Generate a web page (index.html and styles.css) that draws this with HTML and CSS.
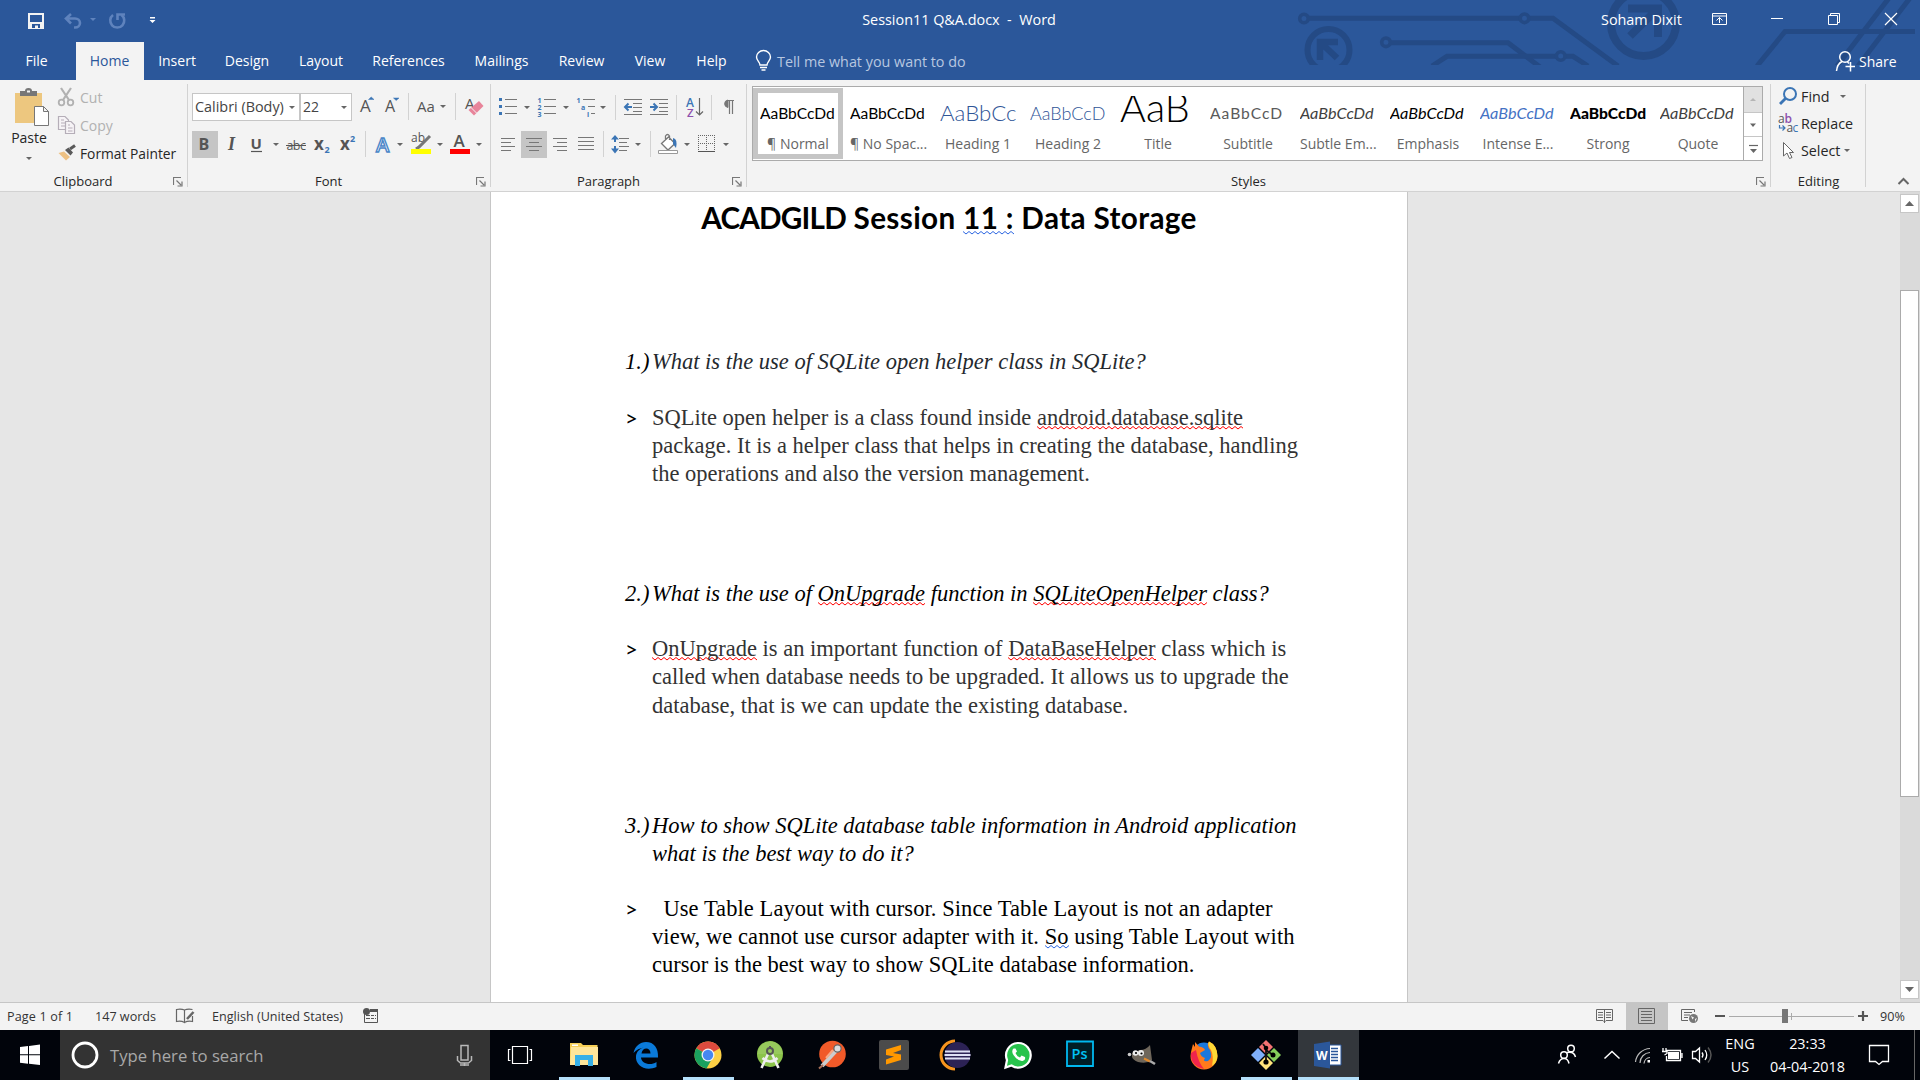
FILE: index.html
```html
<!DOCTYPE html>
<html lang="en">
<head>
<meta charset="utf-8">
<title>Session11 Q&amp;A.docx - Word</title>
<link rel="stylesheet" href="styles.css">
</head>
<body>
<div class="window">
  <header class="header">
    <svg class="circuit" width="640" height="65" viewBox="1290 0 640 65">
      <g fill="none" stroke="#244a85" stroke-width="5">
        <circle cx="1304" cy="18.5" r="4.3" stroke-width="3.6"/>
        <path d="M1309 18.3H1520M1529 18.3H1553L1618 66"/>
        <circle cx="1524.5" cy="18.3" r="4.3" stroke-width="3.6"/>
        <circle cx="1328.5" cy="50" r="21" stroke-width="6"/>
        <path d="M1320 60V42H1338M1320 42L1337 58" stroke-width="6.5"/>
        <circle cx="1386" cy="42.3" r="4.3" stroke-width="3.6"/>
        <path d="M1391 42.8H1508L1540 67"/>
        <path d="M1432 66L1447 56.3H1556M1565 56.3H1573L1588 66"/>
        <circle cx="1560.7" cy="56" r="4.3" stroke-width="3.6"/>
        <circle cx="1643.5" cy="23.5" r="32.5" stroke-width="8"/>
        <path d="M1628 8.500H1658V37M1658 8.500L1630 36" stroke-width="8"/>
        <path d="M1757 66L1785 31.500H1915M1837 66L1889 -2M1858 66L1910 -2"/>
      </g>
    </svg>
    <div class="titlebar">
      <svg width="160" height="42" viewBox="0 0 160 42">
        <path d="M28 13H44V29H28Z" fill="#f3f3f3"/><path d="M30 15H42V22H30ZM32 24H40V28H38V25.500H35V28H32Z" fill="#2b579a"/>
        <g fill="none" stroke="#5f83bd" stroke-width="2.600"><path d="M66 18.500H75A5 4.500 0 0 1 75 27.500H74M71 14L66 18.500L71 23.500"/><path d="M121.500 15A7 7 0 1 1 113 15"/><path d="M117.500 20V14.500H125"/></g>
        <path d="M90 18H96L93 21Z" fill="#5f83bd"/>
        <path d="M150 17H155V18.500H150ZM149.500 20H155.500L152.500 23Z" fill="#fff"/>
      </svg>
      <div class="doc-name"><span class="t">Session11 Q&amp;A.docx&nbsp; -&nbsp; Word</span></div>
      <div class="user"><span class="t">Soham Dixit</span></div>
      <svg width="230" height="42" viewBox="1690 0 230 42"><g fill="none" stroke="#fff">
        <path d="M1712.500 13.500H1726.500V24.500H1712.500ZM1712 16H1727M1719.500 23V17.500M1716.500 20.500L1719.500 17.500L1722.500 20.500"/>
        <path d="M1771 18.500H1783"/>
        <path d="M1828.500 15.500H1837.500V24.500H1828.500ZM1830.500 15V13.500H1839.500V22.500H1838"/>
        <path d="M1885 13L1897 25M1897 13L1885 25" stroke-width="1.200"/></g></svg>
    </div>
    <nav class="tabs">
      <span class="tab file"><span class="t">File</span></span><span class="tab home"><span class="t">Home</span></span><span class="tab insert"><span class="t">Insert</span></span><span class="tab design"><span class="t">Design</span></span><span class="tab layout"><span class="t">Layout</span></span><span class="tab refs"><span class="t">References</span></span><span class="tab mail"><span class="t">Mailings</span></span><span class="tab review"><span class="t">Review</span></span><span class="tab view"><span class="t">View</span></span><span class="tab help"><span class="t">Help</span></span>
      <svg width="35" height="38" viewBox="742 42 35 38"><path d="M760 65C760 62 756.500 60.500 756.500 57A7 6.500 0 0 1 770.500 57C770.500 60.500 767 62 767 65ZM760 67.500H767M761.500 70H765.500" fill="none" stroke="#fff" stroke-width="1.400"/></svg>
      <span class="tell t">Tell me what you want to do</span>
      <span class="share"><svg width="24" height="26" viewBox="1835 48 24 26"><g fill="none" stroke="#fff" stroke-width="1.500"><circle cx="1845" cy="57" r="5.300"/><path d="M1836.500 71C1837 66 1839 63 1842 61.500M1847.500 62L1849 63.500M1845.500 66.500H1855M1850.500 62V71.500"/></g></svg><span class="t">Share</span></span>
    </nav>
  </header>

  <section class="ribbon">
    <div class="group clipboard">
      <div class="group-body">
        <div class="paste">
          <svg width="56" height="48" viewBox="0 80 56 48"><path d="M15 93H42V123H15Z" fill="#edc77f"/><path d="M20 91H25Q25 88 28.500 88T32 91H37V96H20Z" fill="#777"/><path d="M27 90.500H30V92.500H27Z" fill="#f3f3f3"/><path d="M34.500 106.500H43.500L48.500 111.500V125.500H34.500ZM43.500 106.500V111.500H48.500" fill="#fff" stroke="#777"/></svg>
          <span class="t">Paste</span>
          <svg width="56" height="10" viewBox="0 154 56 10"><path d="M26 157H32L29 160Z" fill="#666"/></svg>
        </div>
        <div class="clip-list">
          <div class="cmd off"><svg width="24" height="28" viewBox="56 84 24 28"><g fill="none" stroke="#b1b1b1" stroke-width="1.800"><circle cx="61.500" cy="102.500" r="2.800"/><circle cx="70.500" cy="102.500" r="2.800"/><path d="M61 88L69 100M71 88L63 100" stroke-width="2.200"/></g></svg><span class="t">Cut</span></div>
          <div class="cmd off"><svg width="24" height="28" viewBox="56 112 24 28"><g fill="#f6f3f6" stroke="#b5aeb8" stroke-width="1.200"><path d="M58.500 116.500H65L68.500 120V129.500H58.500ZM61 120H64M61 123H66M61 126H66"/><path d="M65.500 121.500H71L74.500 125V133.500H65.500ZM68 125H70M68 128H72.500M68 131H72.500"/></g></svg><span class="t">Copy</span></div>
          <div class="cmd painter"><svg width="24" height="28" viewBox="56 140 24 28"><path d="M58.500 153L64 151.500L70 157L66 160.500Z" fill="#edc184"/><path d="M65 150L68.500 147.500L73 152.500L70.500 155.500Z" fill="#595959"/><path d="M70 149L75 145.500" stroke="#595959" stroke-width="3"/></svg><span class="t">Format Painter</span></div>
        </div>
      </div>
      <div class="group-label"><span class="t">Clipboard</span><svg class="launch" width="10" height="10" viewBox="0 0 10 10"><path d="M.5 8V.5H8M3.500 3.500L8 8M9 4.500V9H4.500" fill="none" stroke="#777" stroke-width="1.200"/></svg></div>
    </div>

    <div class="group font">
      <div class="group-body stack">
        <div class="row top">
          <div class="combo face"><span class="t">Calibri (Body)</span><i class="caret"></i></div>
          <div class="combo size"><span class="t">22</span><i class="caret"></i></div>
          <svg width="52" height="28" viewBox="352 93 52 28"><g class="glyph"><text x="360" y="112" font-size="17">A</text><text x="385" y="112" font-size="16">A</text></g><path d="M368.500 99.500H374L371.200 97ZM393.500 98H399L396.200 100.500Z" fill="#3b75b5" stroke="#3b75b5" stroke-width=".5"/></svg>
          <svg width="84" height="28" viewBox="404 93 84 28"><path d="M408.500 93V120M455.500 93V120" stroke="#d2d2d2"/><text class="glyph" x="417" y="112" font-size="15">Aa</text><path d="M440 105H446L443 108Z" fill="#666"/><text class="glyph" x="465" y="109" font-size="15">A</text><path d="M479 101L483.500 106L474 115.500L468.500 110Z" fill="#e8849a"/><path d="M471 107.500L476.500 113" stroke="#f3f3f3"/></svg>
        </div>
        <div class="row">
          <span class="on"><svg width="26" height="27" viewBox="192 131 26 27"><text class="glyph" x="198.500" y="150" font-size="16" font-weight="700">B</text></svg></span>
          <svg width="64" height="27" viewBox="218 131 64 27"><text class="serif" x="228" y="150" font-size="18">I</text><text class="glyph" x="250.500" y="149" font-size="15" font-weight="700">U</text><path d="M251 151.500H262" stroke="#555" stroke-width="1.200"/><path d="M273 143H279L276 146Z" fill="#666"/></svg>
          <svg width="88" height="27" viewBox="282 131 88 27"><text class="glyph" x="286.500" y="150" font-size="12.500" letter-spacing="-.6">abc</text><path d="M286 145.500H306" stroke="#555"/><text class="glyph" x="314" y="150" font-size="17" font-weight="700">x</text><text class="blue" x="324.500" y="153" font-size="9" font-weight="700">2</text><text class="glyph" x="340" y="150" font-size="17" font-weight="700">x</text><text class="blue" x="350" y="142" font-size="9" font-weight="700">2</text><path d="M365.500 131V157" stroke="#d2d2d2"/></svg>
          <svg width="118" height="27" viewBox="370 131 118 27"><text class="ui" x="376" y="152" font-size="20" font-weight="600" fill="#fff" stroke="#4a86c8" stroke-width="1.400">A</text><path d="M397 143H403L400 146ZM437 143H443L440 146ZM476 143H482L479 146Z" fill="#666"/><text class="glyph" x="411" y="142" font-size="12">ab</text><path d="M430 136L419 147L416 149" stroke="#777" stroke-width="3" fill="none"/><path d="M411 149H431V154H411Z" fill="#ff0"/><text class="glyph" x="453.500" y="147" font-size="17" font-weight="600">A</text><path d="M450 149H470V154H450Z" fill="red"/></svg>
        </div>
      </div>
      <div class="group-label"><span class="t">Font</span><svg class="launch" width="10" height="10" viewBox="0 0 10 10"><path d="M.5 8V.5H8M3.500 3.500L8 8M9 4.500V9H4.500" fill="none" stroke="#777" stroke-width="1.200"/></svg></div>
    </div>

    <div class="group para">
      <div class="group-body stack">
        <div class="row top">
          <svg width="125" height="28" viewBox="495 93 125 28"><g fill="#3b75b5"><path d="M499 98H502V101H499ZM499 105H502V108H499ZM499 112H502V115H499Z"/><text x="537.500" y="102.500" class="num">1</text><text x="537.500" y="109.500" class="num">2</text><text x="537.500" y="116.500" class="num">3</text><text x="576.500" y="102.500" class="num">1</text><text x="581" y="109.500" class="num">a</text><text x="587" y="116.500" class="num">i</text></g><path d="M505 99.500H517M505 106.500H517M505 113.500H517M544 99.500H556M544 106.500H556M544 113.500H556M583 99.500H595M588 106.500H595M591 113.500H595" stroke="#777"/><path d="M524 106H530L527 109ZM563 106H569L566 109ZM600 106H606L603 109Z" fill="#666"/><path d="M615.500 95V120" stroke="#d2d2d2"/></svg>
          <svg width="62" height="28" viewBox="620 93 62 28"><path d="M624 99.500H642M633 103.500H642M633 107.500H642M633 111.500H642M624 114.500H642M650 99.500H668M659 103.500H668M659 107.500H668M659 111.500H668M650 114.500H668" stroke="#777"/><path d="M632 107H625M628.500 103.500L625 107L628.500 110.500M650 107H657M653.500 103.500L657 107L653.500 110.500" fill="none" stroke="#3b75b5" stroke-width="2"/><path d="M676.500 95V120" stroke="#d2d2d2"/></svg>
          <svg width="58" height="28" viewBox="682 93 58 28"><text x="686" y="106.500" font-size="12" font-weight="600" fill="#3b75b5" class="ui">A</text><text x="687" y="117" font-size="11.500" font-weight="600" fill="#8d50ad" class="ui">Z</text><path d="M699.500 98V115M696 111.500L699.500 115L703 111.500" fill="none" stroke="#666" stroke-width="1.200"/><path d="M711.500 95V120" stroke="#d2d2d2"/><path d="M734 100.500H727M729.500 100V114M732.500 100V114" stroke="#777" stroke-width="1.200"/><path d="M728 100A4 3.800 0 0 0 728 107.500Z" fill="#777" stroke="#777"/></svg>
        </div>
        <div class="row">
          <svg width="26" height="27" viewBox="495 131 26 27"><path d="M501 138.500H515M501 142.500H511M501 146.500H515M501 150.500H511" stroke="#777"/></svg>
          <span class="on"><svg width="26" height="27" viewBox="521 131 26 27"><path d="M526 138.500H542M529 142.500H539M526 146.500H542M529 150.500H539" stroke="#777"/></svg></span>
          <svg width="61" height="27" viewBox="547 131 61 27"><path d="M553 138.500H567M557 142.500H567M553 146.500H567M557 150.500H567M578 137.500H594M578 141.500H594M578 145.500H594M578 149.500H594" stroke="#777"/><path d="M603.500 131V157" stroke="#d2d2d2"/></svg>
          <svg width="47" height="27" viewBox="608 131 47 27"><path d="M619 138.500H629M619 142.500H627M619 146.500H629M619 150.500H627" stroke="#777"/><path d="M615 136V142M615 146V152" stroke="#3b75b5" stroke-width="2"/><path d="M611 139.500L615 135L619 139.500ZM611 148.500L615 153.500L619 148.500Z" fill="#3b75b5"/><path d="M635 143H641L638 146Z" fill="#666"/><path d="M650.500 131V157" stroke="#d2d2d2"/></svg>
          <svg width="80" height="27" viewBox="655 131 80 27"><path d="M661.500 143.500L668.500 137L675 143.500L668 150ZM665.500 140V136Q667.500 133 669.500 136V140" fill="#fff" stroke="#777" stroke-width="1.300"/><path d="M673 138Q678 139 676 148L673 144Z" fill="#3b75b5"/><path d="M658.500 150.500H677.500V153.500H658.500Z" fill="#fff" stroke="#999"/><path d="M684 143H690L687 146ZM723 143H729L726 146Z" fill="#666"/><path d="M698 135.500H716M698 143.500H716M698.500 135V151M706.500 135V151M714.500 135V151" stroke="#666" stroke-dasharray="1 1"/><path d="M698 151.500H715" stroke="#555"/></svg>
        </div>
      </div>
      <div class="group-label"><span class="t">Paragraph</span><svg class="launch" width="10" height="10" viewBox="0 0 10 10"><path d="M.5 8V.5H8M3.500 3.500L8 8M9 4.500V9H4.500" fill="none" stroke="#777" stroke-width="1.200"/></svg></div>
    </div>

    <div class="group styles">
      <div class="group-body">
        <div class="gallery">
          <div class="style picked"><div class="sample"><span class="t">AaBbCcDd</span></div><div class="name t">¶ Normal</div></div>
          <div class="style"><div class="sample"><span class="t">AaBbCcDd</span></div><div class="name t">¶ No Spac...</div></div>
          <div class="style"><div class="sample h1"><span class="t">AaBbCc</span></div><div class="name t">Heading 1</div></div>
          <div class="style"><div class="sample h2"><span class="t">AaBbCcD</span></div><div class="name t">Heading 2</div></div>
          <div class="style"><div class="sample big"><span class="t">AaB</span></div><div class="name t">Title</div></div>
          <div class="style"><div class="sample sub"><span class="t">AaBbCcD</span></div><div class="name t">Subtitle</div></div>
          <div class="style"><div class="sample em soft"><span class="t">AaBbCcDd</span></div><div class="name t">Subtle Em...</div></div>
          <div class="style"><div class="sample em"><span class="t">AaBbCcDd</span></div><div class="name t">Emphasis</div></div>
          <div class="style"><div class="sample em intense"><span class="t">AaBbCcDd</span></div><div class="name t">Intense E...</div></div>
          <div class="style"><div class="sample strong"><span class="t">AaBbCcDd</span></div><div class="name t">Strong</div></div>
          <div class="style"><div class="sample em soft"><span class="t">AaBbCcDd</span></div><div class="name t">Quote</div></div>
          <div class="spin">
            <span class="spin-up"><svg width="18" height="25" viewBox="0 0 18 25"><path d="M6 14H12L9 11Z" fill="#b5b5b5"/></svg></span>
            <span><svg width="18" height="23" viewBox="0 0 18 23"><path d="M6 10.500H12L9 14Z" fill="#666"/></svg></span>
            <span><svg width="18" height="23" viewBox="0 0 18 23"><path d="M5 8.500H14" stroke="#666" stroke-width="1.200"/><path d="M6 12H13L9.500 16Z" fill="#666"/></svg></span>
          </div>
        </div>
      </div>
      <div class="group-label"><span class="t">Styles</span><svg class="launch" width="10" height="10" viewBox="0 0 10 10"><path d="M.5 8V.5H8M3.500 3.500L8 8M9 4.500V9H4.500" fill="none" stroke="#777" stroke-width="1.200"/></svg></div>
    </div>

    <div class="group editing">
      <div class="group-body stack">
        <div class="cmd"><svg width="30" height="27" viewBox="1771 83 30 27"><circle cx="1790" cy="94" r="6" fill="none" stroke="#3b75b5" stroke-width="2"/><path d="M1785.500 98.500L1780 104" stroke="#3b75b5" stroke-width="2.800"/></svg><span class="t">Find</span><i class="caret far"></i></div>
        <div class="cmd"><svg width="30" height="27" viewBox="1771 110 30 27"><g class="ui" font-size="12"><text x="1778" y="123" fill="#555">a</text><text x="1784.500" y="123" fill="#8d50ad" font-weight="600">b</text><text x="1786.500" y="132" fill="#555">a</text><text x="1792.500" y="132" fill="#3b75b5">c</text></g><path d="M1779.500 125V128H1785M1782.500 125.500L1785 128L1782.500 130.500" fill="none" stroke="#3b75b5" stroke-width="1.200"/></svg><span class="t">Replace</span></div>
        <div class="cmd"><svg width="30" height="27" viewBox="1771 137 30 27"><path d="M1783.500 142.500V156L1787 153L1789.500 158.500L1792 157.500L1789.500 152.500H1793.500Z" fill="#fff" stroke="#666"/></svg><span class="t">Select</span><i class="caret near"></i></div>
      </div>
      <div class="group-label"><span class="t">Editing</span></div>
    </div>
    <svg width="54" height="111" viewBox="1866 80 54 111"><path d="M1898.500 184L1903.500 179L1908.500 184" fill="none" stroke="#666" stroke-width="2"/></svg>
  </section>

  <main class="canvas">
    <article class="page">
      <h1><span class="caps">ACADGILD</span> Session <u class="gram">11 :</u> Data Storage</h1>
      <section class="qa">
        <div class="item q slate"><span class="mark">1.)</span><p>What is the use of SQLite open helper class in SQLite?</p></div>
        <div class="item a grey"><span class="mark">&gt;</span><p>SQLite open helper is a class found inside <u class="spell">android.database.sqlite</u><br>package. It is a helper class that helps in creating the database, handling<br>the operations and also the version management.</p></div>
      </section>
      <section class="qa">
        <div class="item q"><span class="mark">2.)</span><p>What is the use of <u class="spell">OnUpgrade</u> function in <u class="spell">SQLiteOpenHelper</u> class?</p></div>
        <div class="item a grey"><span class="mark">&gt;</span><p><u class="spell">OnUpgrade</u> is an important function of <u class="spell">DataBaseHelper</u> class which is<br>called when database needs to be upgraded. It allows us to upgrade the<br>database, that is we can update the existing database.</p></div>
      </section>
      <section class="qa">
        <div class="item q"><span class="mark">3.)</span><p>How to show SQLite database table information in Android application<br>what is the best way to do it?</p></div>
        <div class="item a"><span class="mark">&gt;</span><p><span class="loose">&nbsp; Use Table Layout with cursor. Since Table Layout is not an adapter<br>view, we cannot use cursor adapter with it. <u class="gram">So</u> using Table Layout with</span><br>cursor is the best way to show SQLite database information.</p></div>
      </section>
    </article>
    <div class="scrollbar">
      <span class="arrow"><svg width="17" height="17" viewBox="0 0 17 17"><path d="M4 11H13L8.500 6Z" fill="#666"/></svg></span>
      <span class="thumb"></span>
      <span class="arrow"><svg width="17" height="17" viewBox="0 0 17 17"><path d="M4 6H13L8.500 11Z" fill="#666"/></svg></span>
    </div>
  </main>

  <footer class="status">
    <span class="pages t">Page 1 of 1</span><span class="words t">147 words</span>
    <svg class="proof" width="22" height="27" viewBox="174 1002 22 27"><path d="M184.500 1009Q181 1007.500 176.500 1008.500V1020.500Q181 1019.500 184.500 1021.500ZM184.500 1009Q188 1007.500 192.500 1008.500M184.500 1021.500Q188 1019.500 192.500 1020.500V1015" fill="none" stroke="#666" stroke-width="1.200"/><path d="M193.500 1011L187 1018" stroke="#666" stroke-width="2.500"/></svg>
    <span class="lang t">English (United States)</span>
    <svg width="20" height="27" viewBox="361 1003 20 27"><path d="M364.500 1014V1022.500H377.500V1010M366 1015.500H376M366 1018.500H376" fill="none" stroke="#555"/><path d="M370 1009H378V1012H370Z" fill="#555"/><circle cx="366.500" cy="1011.500" r="3.500" fill="#555"/><path d="M370.500 1014V1021M374.500 1014V1021" stroke="#f3f3f3"/></svg>
    <div class="views">
      <svg width="36" height="27" viewBox="1590 1003 36 27"><path d="M1604.500 1009V1023M1604.500 1009.500H1596.500V1020.500H1603L1604.500 1022L1606 1020.500H1612.500V1009.500H1604.500M1598 1012.500H1603M1598 1015H1603M1598 1017.500H1603M1606 1012.500H1611M1606 1015H1611M1606 1017.500H1611" fill="none" stroke="#666"/></svg>
      <span class="on"><svg width="42" height="27" viewBox="1626 1003 42 27"><path d="M1638.500 1008.500H1654.500V1023.500H1638.500ZM1641 1011.500H1652M1641 1014.500H1652M1641 1017.500H1652M1641 1020.500H1652" fill="none" stroke="#666"/></svg></span>
      <svg width="44" height="27" viewBox="1668 1003 44 27"><path d="M1688 1020.500H1681.500V1009.500H1694.500V1012M1684 1012.500H1692M1684 1015H1690M1684 1017.500H1688" fill="none" stroke="#666"/><circle cx="1693.500" cy="1018.500" r="4.500" fill="#777"/><path d="M1691 1016L1694 1017.500L1692.500 1019.500ZM1695 1019L1697 1018L1695 1022Z" fill="#f3f3f3"/></svg>
      <svg width="166" height="27" viewBox="1712 1003 166 27"><path d="M1729 1016.500H1854M1791.500 1013V1020" stroke="#aaa"/><path d="M1715 1016H1725M1858 1016H1868M1863 1011V1021" stroke="#555" stroke-width="2.200"/><path d="M1782 1009H1788V1023H1782Z" fill="#777"/></svg>
      <span class="zoom"><span class="t">90%</span></span>
    </div>
  </footer>
</div>

<nav class="taskbar">
  <svg width="60" height="50" viewBox="0 1030 60 50"><path d="M20 1047L28 1046V1054.300H20ZM29 1045.900L40 1044.500V1054.300H29ZM20 1055.300H28V1063.700L20 1062.700ZM29 1055.300H40V1065L29 1063.800Z" fill="#fff"/></svg>
  <div class="search"><svg width="50" height="50" viewBox="60 1030 50 50"><circle cx="85" cy="1055" r="12" fill="none" stroke="#fff" stroke-width="2.800"/></svg><span class="t">Type here to search</span><svg class="mic" width="30" height="50" viewBox="450 1030 30 50"><path d="M461 1045.500H468V1060H461ZM457.500 1056V1060.500L460.500 1063H468.500L471.500 1060.500V1056M464.500 1063V1066M460 1065H469" fill="none" stroke="#b8b8b8" stroke-width="1.500"/></svg></div>
  <svg class="app" viewBox="490 1030 62 50"><path d="M512.500 1046.500H527.500V1063.500H512.500ZM510.500 1049.500H508.500V1060.500H510.500M529.500 1049.500H531.500V1060.500H529.500" fill="none" stroke="#fff" stroke-width="1.200"/></svg>
  <svg class="app open" viewBox="552 1030 62 50"><path d="M570 1043H581L583 1045H597.500V1065H570Z" fill="#f6cf57"/><path d="M571 1047H598V1065H570Z" fill="#ffe69a"/><path d="M572 1044.500H578V1046H572Z" fill="#fff"/><path d="M575 1066V1055H593V1066H588V1060H580V1066Z" fill="#37b0e8"/></svg>
  <svg class="app" viewBox="614 1030 62 50"><path d="M633.500 1053C635 1046 640 1042 646 1042C654 1042 658.500 1048 658 1057.500H641C641 1063 650 1066.500 656.500 1062V1067C645 1072 635 1065 636 1056C636.500 1051.500 640 1048.500 644 1047.500C640 1048 636 1050 633.500 1053ZM641.500 1053.500H650.500C650.500 1046.500 642 1047 641.500 1053.500Z" fill="#0a7ad9"/></svg>
  <svg class="app open" viewBox="676 1030 62 50"><circle cx="708" cy="1055" r="13.500" fill="#fdd045"/><path d="M708 1055L696.300 1048.200A13.500 13.500 0 0 1 719.700 1048.200Z" fill="#dd4b3e"/><path d="M708 1055L696.300 1048.200A13.500 13.500 0 0 0 706.500 1068.400L713 1057Z" fill="#1aa15f"/><path d="M708 1041.500L719.700 1048.500H708Z" fill="#dd4b3e"/><circle cx="708" cy="1055" r="6.500" fill="#f3f3f3"/><circle cx="708" cy="1055" r="5.200" fill="#4687f1"/></svg>
  <svg class="app" viewBox="738 1030 62 50"><circle cx="770" cy="1054" r="13" fill="#8bc34a"/><path d="M757.500 1054A12.500 12.500 0 0 1 782.500 1054Z" fill="#97c95c"/><path d="M768 1054L761.500 1068M772 1054L778.500 1068M762.500 1058Q770 1065 777.500 1058" fill="none" stroke="#eee" stroke-width="2.600"/><circle cx="770" cy="1051" r="3" fill="none" stroke="#555" stroke-width="2"/><path d="M769 1046H771V1049H769Z" fill="#555"/></svg>
  <svg class="app" viewBox="800 1030 62 50"><circle cx="832.500" cy="1054" r="13.300" fill="#f15a29"/><path d="M836 1051L822 1066" stroke="#ccc" stroke-width="4"/><path d="M833 1050L826 1058" stroke="#f8a884" stroke-width="2"/><circle cx="837.500" cy="1048.500" r="3.600" fill="#ddd" stroke="#666" stroke-width="1.200"/><path d="M823 1065L819 1068.500" stroke="#a9705a" stroke-width="2"/></svg>
  <svg class="app" viewBox="862 1030 62 50"><rect x="879" y="1040" width="30" height="30" rx="2" fill="#4b4b4b"/><path d="M901 1045V1050L893 1053L901 1054.500V1060L886 1064.500V1059.500L894 1056.500L886 1055V1049.500Z" fill="#ff9800"/></svg>
  <svg class="app" viewBox="924 1030 62 50"><path d="M955 1041A14 14 0 0 0 955 1069" fill="none" stroke="#f7941e" stroke-width="3"/><circle cx="957.500" cy="1055" r="13" fill="#2c2255"/><path d="M945 1051.500H970M944.500 1055H970.500M945 1058.500H970" stroke="#dfe0f5" stroke-width="1.800"/></svg>
  <svg class="app" viewBox="986 1030 62 50"><path d="M1005.500 1067.500L1007 1060A12.300 12.300 0 1 1 1011.500 1065.500Z" fill="#27c34c" stroke="#fff" stroke-width="2.200"/><path d="M1013.500 1048.500Q1011 1051 1013.500 1055Q1018 1061.500 1022.500 1061Q1026 1060 1025 1057L1021.500 1055.500L1020 1057.500Q1016.500 1056 1015.500 1053L1017 1051.500L1015.500 1048.500Z" fill="#fff"/></svg>
  <svg class="app" viewBox="1048 1030 62 50"><path d="M1067 1041.500H1093V1066H1067Z" fill="#001d26" stroke="#00b9f0" stroke-width="1.800"/><text x="1071.500" y="1059" font-size="14.500" font-weight="600" fill="#00c0f5" class="ui">Ps</text></svg>
  <svg class="app" viewBox="1110 1030 62 50"><path d="M1132 1053L1140 1050Q1146 1050 1150 1045L1152 1060Q1147 1064 1138 1062Q1133 1060 1132 1057Z" fill="#6e665b"/><circle cx="1135.500" cy="1053" r="2.800" fill="#eee"/><circle cx="1141" cy="1053" r="3" fill="#eee"/><circle cx="1136" cy="1053" r="1.100"/><circle cx="1141.500" cy="1053.500" r="1.100"/><circle cx="1129.500" cy="1054.500" r="1.800" fill="#ccc"/><path d="M1144 1058.500L1150 1061.500" stroke="#e08a2c" stroke-width="2.200"/><path d="M1150 1061L1155 1064" stroke="#aaa" stroke-width="2.600"/></svg>
  <svg class="app" viewBox="1172 1030 62 50"><circle cx="1204" cy="1054" r="11.500" fill="#1a78dc"/><path d="M1191 1052L1193 1044L1195 1047L1195 1042L1199 1046.500Q1204 1047 1205 1050L1200 1053Q1201 1057 1205 1058Q1202 1062 1208 1061Q1213 1058 1210 1050Q1206 1045 1209 1041.500Q1217 1045 1217.500 1056A13.500 13.500 0 0 1 1190.500 1056Z" fill="#ff7a1c"/><path d="M1191 1053Q1190 1066 1204 1069Q1198 1062 1196 1050Z" fill="#f0254c"/><path d="M1209 1041.500Q1217 1045 1217.500 1056Q1217 1063 1212 1066Q1214 1056 1211 1050Q1207 1045 1209 1041.500Z" fill="#ffd936"/></svg>
  <svg class="app open" viewBox="1234 1030 62 50"><path d="M1266 1040L1273 1047L1266 1054L1259 1047Z" fill="#f47272"/><path d="M1258 1048L1265 1055L1258 1062L1251 1055Z" fill="#7fb0fb"/><path d="M1274 1048L1281 1055L1274 1062L1267 1055Z" fill="#86cf5b"/><path d="M1266 1056L1273 1063L1266 1070L1259 1063Z" fill="#ffe37c"/><path d="M1263 1044L1266 1048V1064M1266 1050L1273 1055" fill="none" stroke="#111" stroke-width="1.800"/><circle cx="1266" cy="1048" r="2.300"/><circle cx="1266" cy="1062" r="2.600"/><circle cx="1273" cy="1055" r="2.500"/></svg>
  <span class="current"><svg width="61" height="50" viewBox="1298 1030 61 50"><path d="M1327 1045H1341V1065H1327Z" fill="#fff" stroke="#2b579a"/><path d="M1331 1048.500H1338M1331 1051.500H1338M1331 1054.500H1338M1331 1057.500H1338M1331 1060.500H1338" stroke="#2b579a" stroke-width="1.300"/><path d="M1314 1044L1330 1041.500V1068.500L1314 1066Z" fill="#2b579a"/><text x="1316" y="1060" font-size="12" font-weight="700" fill="#fff" class="ui">W</text></svg></span>
  <div class="tray">
    <svg width="166" height="50" viewBox="1555 1030 166 50"><g fill="none" stroke="#fff" stroke-width="1.500"><circle cx="1571" cy="1048.500" r="3.300"/><circle cx="1564" cy="1055" r="3.300"/><path d="M1558.500 1063.500Q1560 1058.500 1564 1058.500T1569 1063.500M1567 1052.500Q1574 1051 1575.500 1057"/><path d="M1604.500 1058.500L1612 1051.500L1619.500 1058.500"/><path d="M1635.500 1062A15 15 0 0 1 1650 1048.500M1640 1063A10.500 10.500 0 0 1 1650 1052.500M1644 1063.500A6.500 6.500 0 0 1 1650 1057.500" stroke="#bbb" stroke-width="1.200"/><path d="M1666.500 1050.500H1680.500V1060.500H1666.500V1056M1682 1053V1058M1663 1048V1051M1666 1048V1051M1662 1051.500H1667V1053.500L1664.500 1055" stroke-width="1.300"/><path d="M1692.500 1051.500H1695.500L1699.500 1048V1062L1695.500 1058.500H1692.500ZM1702 1052.500Q1704 1055 1702 1057.500M1705 1050Q1708.500 1055 1705 1060" stroke-width="1.300"/><path d="M1708 1047.500Q1714 1055 1708 1062.500" stroke="#555"/></g><path d="M1668 1052H1679V1059H1668ZM1647.500 1060H1650V1062.500H1647.500Z" fill="#fff"/></svg>
    <div class="lang-box"><span class="t">ENG</span><span class="t">US</span></div>
    <div class="clock"><span class="t">23:33</span><span class="t">04-04-2018</span></div>
    <svg width="64" height="50" viewBox="1856 1030 64 50"><path d="M1869.500 1045.500H1888.500V1061.500H1882.500L1879 1064.500L1875.500 1061.500H1869.500Z" fill="none" stroke="#fff" stroke-width="1.300"/><path d="M1914.500 1030V1080" stroke="#666"/></svg>
  </div>
</nav>
</body>
</html>
```
FILE: styles.css
```css
* { box-sizing: border-box; }
body { margin: 0; width: 1920px; height: 1080px; overflow: hidden; font: 14px/20px "Open Sans", "Noto Sans", sans-serif; color: #262626; background: #e6e6e6; }
svg { display: block; flex: none; }
.t { white-space: nowrap; }
.window { height: 1030px; display: flex; flex-direction: column; }
.ui { font-family: "Open Sans", sans-serif; }
.glyph { font-family: "Open Sans", sans-serif; fill: #555; }
.blue { font-family: "Open Sans", sans-serif; fill: #3b75b5; }
.serif { font-family: "Liberation Serif", serif; font-weight: 700; font-style: italic; fill: #555; }
.num { font: 700 7px "Open Sans", sans-serif; }

.header { position: relative; height: 80px; background: #2b579a; color: #fff; }
.circuit { position: absolute; left: 1290px; top: 0; }
.titlebar { position: relative; height: 42px; display: flex; font-size: 14.4px; line-height: 39px; }
.doc-name { width: 1441px; padding-left: 157px; text-align: center; }
.user { width: 89px; }
.tabs { position: relative; height: 38px; display: flex; line-height: 38px; }
.tab { text-align: center; }
.file { width: 73px; margin-right: 3px; }
.home { width: 68px; padding-right: 1px; background: #f3f3f3; color: #2b579a; }
.insert { width: 66px; }
.design { width: 74px; }
.layout { width: 74px; }
.refs { width: 101px; }
.mail { width: 85px; }
.review { width: 75px; }
.view { width: 62px; }
.help { width: 61px; }
.tell { color: #b8c7e0; font-size: 14.35px; line-height: 39px; }
.share { margin-left: auto; width: 85px; display: flex; align-items: center; line-height: 41px; }

.ribbon { height: 112px; background: #f3f3f3; border-bottom: 1px solid #d2d2d2; display: flex; }
.group { position: relative; height: 111px; display: flex; flex-direction: column; background: linear-gradient(#d2d2d2, #d2d2d2) right 4px / 1px 103px no-repeat; }
.group-body { height: 91px; display: flex; }
.stack { flex-direction: column; }
.group-label { height: 20px; text-align: center; font-size: 13px; line-height: 20px; }
.launch { position: absolute; right: 5px; top: 97px; }
.clipboard { width: 188px; }
.clipboard .group-label { padding-right: 22px; }
.font { width: 303px; }
.font .group-label { padding-right: 22px; }
.para { width: 256px; }
.para .group-label { padding-right: 21px; }
.styles { width: 1024px; }
.styles .group-label { padding-right: 21px; }
.editing { width: 95px; }
.paste { width: 56px; display: flex; flex-direction: column; align-items: center; }
.paste .t { line-height: 20px; margin: 0 0 6px 2px; }
.clip-list { padding-top: 4px; }
.cmd { display: flex; height: 28px; align-items: center; }
.painter { font-size: 13.8px; }
.off { color: #b1b1b1; }
.font .group-body, .para .group-body { padding: 13px 0 0 4px; }
.row { display: flex; height: 27px; }
.top { height: 28px; margin-bottom: 10px; }
.on { background: #c5c5c5; }
.combo { height: 28px; background: #fff; border: 1px solid #c6c6c6; display: flex; align-items: center; color: #444; padding-left: 2px; }
.face { width: 108px; font-size: 14.4px; }
.size { width: 52px; }
.caret { border: 3px solid transparent; border-top-color: #666; border-bottom: 0; margin-left: auto; margin-right: 4px; }
.editing .group-body { padding-top: 3px; }
.editing .cmd { height: 27px; font-size: 14.3px; }
.editing .far { margin: 0 0 0 10px; }
.editing .near { margin: 0 0 0 4px; }

.styles .group-body { padding: 6px 0 0 5px; }
.gallery { width: 1011px; height: 75px; background: #fff; border: 1px solid #ababab; display: flex; }
.style { width: 90px; height: 71px; margin-top: 1px; padding: 8px 0 0 7px; }
.picked { border: 5px solid #c5c5c5; padding: 3px 0 0 2px; }
.sample { width: 76px; height: 38px; overflow: hidden; font: 15.6px/34px Lato, sans-serif; color: #000; }
.name { width: 76px; text-align: center; color: #666; line-height: 20px; }
.h1 { font-size: 22.3px; color: #2f5597; font-weight: 300; }
.h2 { font-size: 18px; color: #2f5597; font-weight: 300; }
.big { font-size: 39.5px; line-height: 21px; font-weight: 300; }
.sub { color: #5a5a5a; letter-spacing: 1px; }
.em { font-style: italic; font-size: 16.3px; }
.soft { color: #404040; }
.intense { color: #4472c4; }
.strong { font-weight: 900; }
.spin { width: 19px; border-left: 1px solid #ababab; }
.spin span { display: block; border-bottom: 1px solid #c6c6c6; }
.spin span:last-child { border: 0; }
.spin .spin-up { background: #e1e1e1; }

.canvas { height: 810px; display: flex; justify-content: space-between; padding-left: 490px; }
.page { width: 918px; height: 810px; overflow: hidden; background: #fff; border: solid #c6c6c6; border-width: 0 1px; }
h1 { margin: 0; height: 156px; padding-top: 8px; text-align: center; font: 700 29.7px/36px Lato, sans-serif; letter-spacing: .35px; color: #000; white-space: nowrap; }
.caps { letter-spacing: -.8px; }
u { text-decoration: none; background: repeat-x left bottom / 6px 4px; }
.spell { background-image: url("data:image/svg+xml,%3Csvg xmlns='http://www.w3.org/2000/svg' width='6' height='4'%3E%3Cpath d='M-1 .5L0 .5L3 3L6 .5' fill='none' stroke='red'/%3E%3C/svg%3E"); }
.gram { background-image: url("data:image/svg+xml,%3Csvg xmlns='http://www.w3.org/2000/svg' width='6' height='4'%3E%3Cpath d='M-1 .5L0 .5L3 3L6 .5' fill='none' stroke='%232b65e0'/%3E%3C/svg%3E"); }
.qa { height: 231.8px; padding-left: 134px; font: 22.5px/28.1px "Liberation Serif", serif; color: #000; white-space: nowrap; }
.item { display: flex; }
.item p { margin: 0; }
.mark { width: 27px; }
.q { font-style: italic; margin-bottom: 27.5px; }
.a .mark { font: 22px/28px Lato, sans-serif; }
.slate p { color: #24292e; }
.grey p { color: #333; }
.loose { letter-spacing: .07px; }

.scrollbar { width: 20px; padding: 2px 0 3px; background: #dadada; display: flex; flex-direction: column; }
.arrow { width: 19px; height: 19px; background: #fff; border: 1px solid #c6c6c6; }
.thumb { width: 19px; height: 507px; margin: 77px 0 auto; background: #fff; border: 1px solid #ababab; }

.status { height: 28px; background: #f3f3f3; border-top: 1px solid #c6c6c6; display: flex; align-items: center; font-size: 12.6px; color: #333; }
.pages { width: 88px; margin-left: 7px; letter-spacing: .15px; }
.words { width: 79px; }
.proof { margin-right: 16px; }
.lang { width: 149px; }
.views { margin-left: auto; width: 330px; display: flex; align-items: center; }
.zoom { padding-left: 2px; }

.taskbar { height: 50px; background: #01040b; display: flex; color: #fff; }
.search { width: 430px; background: #333; color: #a8a8a8; display: flex; align-items: center; font-size: 16.7px; }
.search .t { padding-top: 1px; }
.mic { margin-left: auto; margin-right: 10px; }
.app { width: 62px; height: 50px; }
.open { background: linear-gradient(#b4e0fb, #b4e0fb) 7px 47px / 51px 3px no-repeat; }
.current { width: 61px; margin-left: 2px; background: linear-gradient(#b4e0fb, #b4e0fb) 0 47px / 61px 3px no-repeat #33373c; }
.tray { margin-left: auto; display: flex; font-size: 14.4px; }
.lang-box, .clock { display: flex; flex-direction: column; align-items: center; padding-top: 2px; line-height: 23px; }
.lang-box { width: 38px; }
.clock { width: 97px; }
```
